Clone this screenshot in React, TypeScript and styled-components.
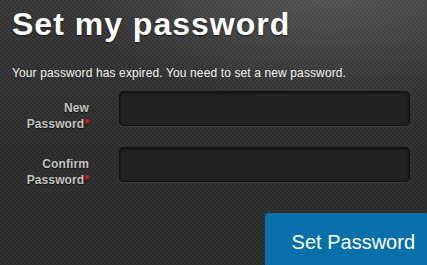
import styled, { createGlobalStyle } from 'styled-components';

const GlobalStyle = createGlobalStyle`
  html, body {
    margin: 0;
    padding: 0;
    background: #2a2a2a;
  }
  body {
    font-family: "Liberation Sans", Arial, sans-serif;
  }
`;

const Page = styled.div`
  position: relative;
  width: 427px;
  height: 265px;
  overflow: hidden;
  box-sizing: border-box;
  padding: 6px 17px 0 12px;
  background-color: #2a2a2a;
  background-image:
    radial-gradient(ellipse 260px 130px at 330px -20px, rgba(255, 255, 255, 0.16), rgba(255, 255, 255, 0) 100%),
    linear-gradient(180deg, rgba(255, 255, 255, 0.05), rgba(255, 255, 255, 0) 60%),
    linear-gradient(45deg, rgba(255, 255, 255, 0.035) 25%, transparent 25%, transparent 75%, rgba(255, 255, 255, 0.035) 75%),
    linear-gradient(45deg, rgba(255, 255, 255, 0.035) 25%, transparent 25%, transparent 75%, rgba(255, 255, 255, 0.035) 75%);
  background-size: auto, auto, 4px 4px, 4px 4px;
  background-position: 0 0, 0 0, 0 0, 2px 2px;
`;

const Title = styled.h1`
  margin: 0;
  font-size: 32px;
  line-height: 36px;
  font-weight: bold;
  letter-spacing: 1px;
  color: #fff;
  text-shadow: 0 1px 2px rgba(0, 0, 0, 0.6);
`;

const Intro = styled.p`
  margin: 23px 0 0;
  font-size: 12px;
  line-height: 16px;
  letter-spacing: 0.12px;
  color: #f2f2f2;
`;

const Form = styled.form`
  margin-top: 10px;
  display: grid;
  grid-template-columns: 77px 291px;
  grid-auto-rows: 35px;
  column-gap: 30px;
  row-gap: 21px;
`;

const Label = styled.label`
  padding-top: 9px;
  text-align: right;
  font-size: 12px;
  line-height: 16px;
  font-weight: bold;
  letter-spacing: 0.1px;
  color: #c4c4c4;
  text-shadow: 0 1px 1px rgba(0, 0, 0, 0.7);
`;

const Required = styled.span`
  color: #e41b17;
`;

const Input = styled.input`
  box-sizing: border-box;
  width: 291px;
  height: 35px;
  margin: 0;
  padding: 0 8px;
  border: 1px solid #121212;
  border-radius: 4px;
  background: #222;
  color: #eee;
  font-family: inherit;
  font-size: 14px;
  box-shadow: inset 0 1px 3px rgba(0, 0, 0, 0.6), 0 1px 0 rgba(255, 255, 255, 0.06);
  outline: none;
`;

const Footer = styled.div`
  display: flex;
  justify-content: flex-end;
  margin: 31px -17px 0 0;
`;

const SubmitButton = styled.button`
  height: 58px;
  padding: 0 12px 0 27px;
  border: none;
  border-top-left-radius: 3px;
  background: #0770ab;
  color: #fff;
  font-family: "Liberation Sans", Arial, sans-serif;
  font-size: 20px;
  cursor: pointer;
`;

export default function App() {
  return (
    <>
      <GlobalStyle />
      <Page>
        <Title>Set my password</Title>
        <Intro>Your password has expired. You need to set a new password.</Intro>
        <Form onSubmit={(e) => e.preventDefault()}>
          <Label htmlFor="new-password">
            New
            <br />
            Password<Required>*</Required>
          </Label>
          <Input id="new-password" type="password" />
          <Label htmlFor="confirm-password">
            Confirm
            <br />
            Password<Required>*</Required>
          </Label>
          <Input id="confirm-password" type="password" />
        </Form>
        <Footer>
          <SubmitButton type="button">Set Password</SubmitButton>
        </Footer>
      </Page>
    </>
  );
}
